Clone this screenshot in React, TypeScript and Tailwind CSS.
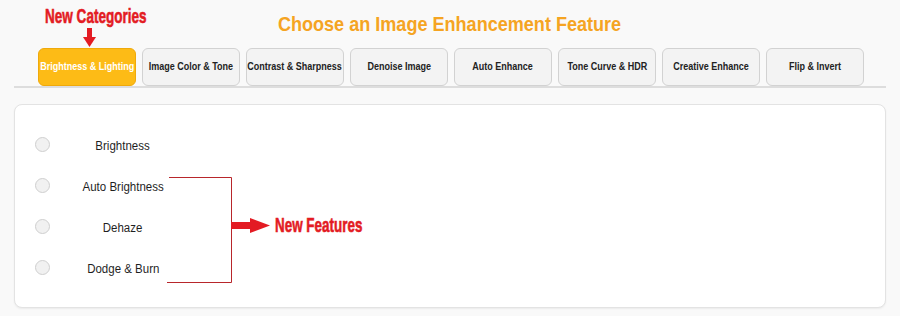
const tabs = [
  'Brightness & Lighting',
  'Image Color & Tone',
  'Contrast & Sharpness',
  'Denoise Image',
  'Auto Enhance',
  'Tone Curve & HDR',
  'Creative Enhance',
  'Flip & Invert',
]

const features = ['Brightness', 'Auto Brightness', 'Dehaze', 'Dodge & Burn']

export default function App() {
  return (
    <div className="relative h-[316px] w-[900px] overflow-hidden bg-[#f9f9f9] font-['Liberation_Sans',Arial,sans-serif]">
      {/* header */}
      <div className="relative h-[48px] pt-[13px] text-center">
        <span className="inline-block scale-x-[0.86] whitespace-nowrap text-[21px] font-bold leading-none text-[#f5a422]">
          Choose an Image Enhancement Feature
        </span>
        <span className="absolute left-[45px] top-[5px] inline-block origin-left scale-x-[0.645] whitespace-nowrap text-[21px] font-bold leading-none text-[#e31b23] [-webkit-text-stroke:0.6px_#e31b23]">
          New Categories
        </span>
        <svg className="absolute left-[83px] top-[28px]" width="13" height="19" viewBox="0 0 13 19">
          <rect x="4" y="0" width="5" height="9.5" fill="#e31b23" />
          <polygon points="0,9 13,9 6.5,19" fill="#e31b23" />
        </svg>
      </div>

      {/* tabs */}
      <div className="flex h-[38px] gap-[6px] pl-[38px]">
        {tabs.map((t, i) => (
          <div
            key={t}
            className={
              i === 0
                ? 'flex w-[98px] items-center justify-center rounded-[6px] border border-[#efa90b] bg-[#fdbb16] text-white'
                : 'flex w-[98px] items-center justify-center rounded-[6px] border border-[#d2d2d2] bg-[#f3f3f3] text-[#222]'
            }
          >
            <span className="inline-block scale-x-[0.9] whitespace-nowrap text-[10px] font-bold leading-none">{t}</span>
          </div>
        ))}
      </div>
      <div className="mx-[14px] h-[2px] bg-[#dddddd]" />

      {/* card */}
      <div className="relative mx-[14px] mt-[16px] h-[204px] rounded-[8px] border border-[#e3e3e3] bg-white pl-[20px] pt-[19px] shadow-[0_1px_2px_rgba(0,0,0,0.06)]">
        {features.map((f) => (
          <div key={f} className="flex h-[41px] items-center">
            <div className="h-[15px] w-[15px] rounded-full border border-[#cfcfcf] bg-[#f1f1f1]" />
            <div className="ml-[8px] w-[130px] text-center">
              <span className="inline-block scale-x-[0.92] whitespace-nowrap text-[12.5px] leading-none text-[#1f1f1f]">{f}</span>
            </div>
          </div>
        ))}

        {/* annotation */}
        <svg className="absolute left-[152px] top-[72px]" width="110" height="108" viewBox="0 0 110 108">
          <path d="M2 0.5 H64.5 V105.5 H0" fill="none" stroke="#b8262b" strokeWidth="1" />
          <rect x="64" y="45" width="20" height="7" fill="#e31b23" />
          <polygon points="83,41 103,48.5 83,56" fill="#e31b23" />
        </svg>
        <span className="absolute left-[260px] top-[109px] inline-block origin-left scale-x-[0.64] whitespace-nowrap text-[21px] font-bold leading-none text-[#e31b23] [-webkit-text-stroke:0.6px_#e31b23]">
          New Features
        </span>
      </div>
    </div>
  )
}
